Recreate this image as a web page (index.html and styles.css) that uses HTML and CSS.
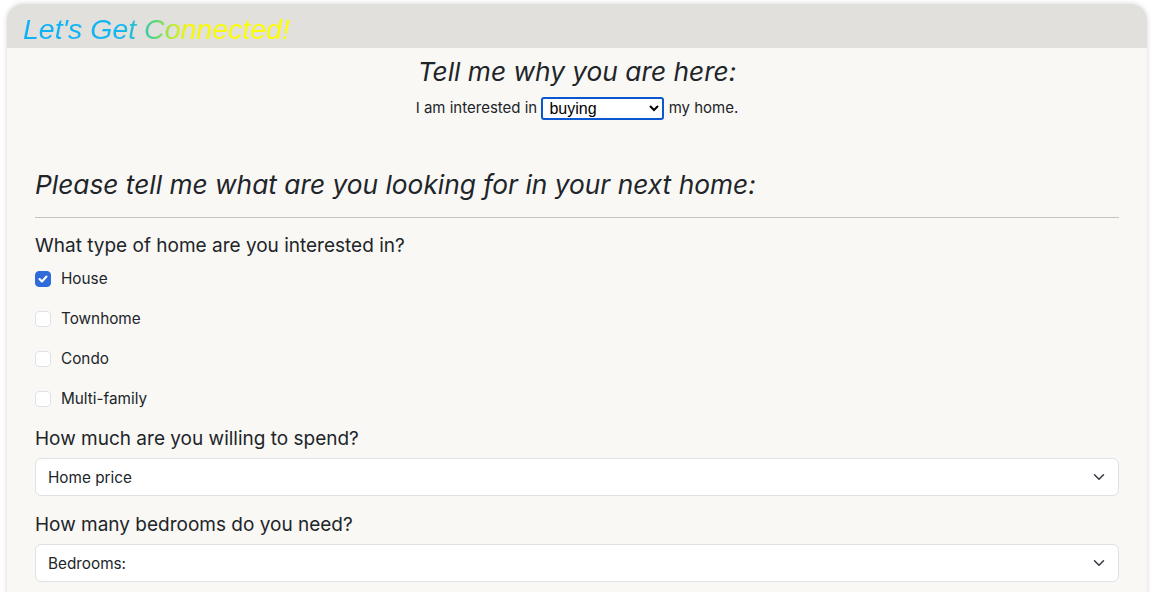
FILE: index.html
```html
<!DOCTYPE html>
<html>
<head>
<meta charset="utf-8">
<link rel="stylesheet" href="styles.css">
</head>
<body>
<div class="card">
  <div class="card-header">
    <h1 class="brand">Let's Get Connected!</h1>
  </div>
  <div class="card-body">
    <div class="intro">
      <h2 class="intro-title">Tell me why you are here:</h2>
      <p class="intro-line">I am interested in
        <select class="mini-select">
          <option>buying</option>
          <option>selling</option>
        </select>
        my home.</p>
    </div>
    <h2 class="section-title">Please tell me what are you looking for in your next home:</h2>
    <hr class="divider">
    <div class="question">What type of home are you interested in?</div>
    <div class="checks">
      <label class="check"><input type="checkbox" class="check-input" checked><span>House</span></label>
      <label class="check"><input type="checkbox" class="check-input"><span>Townhome</span></label>
      <label class="check"><input type="checkbox" class="check-input"><span>Condo</span></label>
      <label class="check"><input type="checkbox" class="check-input"><span>Multi-family</span></label>
    </div>
    <div class="question">How much are you willing to spend?</div>
    <div class="select-wrap">
      <select class="form-select"><option>Home price</option></select>
      <svg class="chev" viewBox="0 0 16 16" width="16" height="16"><path d="M2 5l6 6 6-6" fill="none" stroke="#343a40" stroke-width="2" stroke-linecap="round" stroke-linejoin="round"/></svg>
    </div>
    <div class="question">How many bedrooms do you need?</div>
    <div class="select-wrap">
      <select class="form-select"><option>Bedrooms:</option></select>
      <svg class="chev" viewBox="0 0 16 16" width="16" height="16"><path d="M2 5l6 6 6-6" fill="none" stroke="#343a40" stroke-width="2" stroke-linecap="round" stroke-linejoin="round"/></svg>
    </div>
  </div>
</div>
</body>
</html>
```

FILE: styles.css
```css
html, body {
  margin: 0;
  padding: 0;
  background: #ffffff;
}
body {
  font-family: Inter, "Noto Sans", sans-serif;
  color: #212529;
  padding: 4px 7px 0;
  height: 592px;
  box-sizing: border-box;
  overflow: hidden;
}
.card {
  background: #f9f8f5;
  border-radius: 16px 16px 0 0;
  box-shadow: 0 0 5px rgba(0, 0, 0, 0.18);
  min-height: 700px;
  overflow: hidden;
}
.card-header {
  height: 44px;
  background: #e1e0dc;
  padding-left: 16px;
  display: flex;
  align-items: flex-end;
}
.brand {
  margin: 0 0 2px;
  font-family: "Liberation Sans", Arial, sans-serif;
  font-style: italic;
  font-weight: 400;
  font-size: 28.5px;
  line-height: 34px;
  background: linear-gradient(90deg, #0cb2f7 0%, #12b6f0 36%, #30c4c4 44%, #5cd872 50%, #b8ec2a 56%, #f6f808 62%, #ffff00 100%);
  -webkit-background-clip: text;
  background-clip: text;
  color: transparent;
}
.card-body {
  padding: 0 28px;
}
.intro {
  text-align: center;
  padding-top: 8px;
}
.intro-title {
  margin: 0;
  font-size: 26.3px;
  font-style: italic;
  font-weight: 400;
  line-height: 32px;
}
.intro-line {
  margin: 9px 0 0;
  font-size: 15px;
  line-height: 22px;
}
.mini-select {
  font-family: "Liberation Sans", Arial, sans-serif;
  font-size: 16px;
  width: 123px;
  height: 23px;
  border: 2px solid #0b57d0;
  border-radius: 3px;
  background: #fff;
  color: #000;
  padding: 0 2px;
  vertical-align: middle;
}
.section-title {
  margin: 49px 0 0;
  font-size: 26.3px;
  font-style: italic;
  font-weight: 400;
  line-height: 32px;
}
.divider {
  margin: 16px 0 0;
  border: 0;
  border-top: 1px solid #c5c4c1;
}
.question {
  font-size: 19px;
  line-height: 24px;
  margin-top: 16px;
}
.checks {
  display: flex;
  flex-direction: column;
  gap: 16px;
  margin-top: 9px;
}
.check {
  display: flex;
  align-items: center;
  gap: 10px;
  font-size: 15.3px;
  line-height: 24px;
}
.check-input {
  appearance: none;
  -webkit-appearance: none;
  width: 16px;
  height: 16px;
  margin: 0;
  border: 1px solid #dee2e6;
  border-radius: 4px;
  background: #fff;
}
.check-input:checked {
  background: #2f6bd9 url("data:image/svg+xml,%3csvg xmlns='http://www.w3.org/2000/svg' viewBox='0 0 20 20'%3e%3cpath fill='none' stroke='%23fff' stroke-linecap='round' stroke-linejoin='round' stroke-width='3' d='m5 10 3.5 3.5 6.5-7'/%3e%3c/svg%3e") center/100% no-repeat;
  border-color: #2f6bd9;
}
.checks + .question {
  margin-top: 16px;
}
.select-wrap {
  position: relative;
  margin-top: 7px;
}
.select-wrap + .question {
  margin-top: 17px;
}
.form-select {
  appearance: none;
  -webkit-appearance: none;
  display: block;
  width: 100%;
  height: 38px;
  padding: 0 36px 0 12px;
  font-family: Inter, "Noto Sans", sans-serif;
  font-size: 15.3px;
  color: #212529;
  background: #fff;
  border: 1px solid #dee2e6;
  border-radius: 6px;
}
.chev {
  position: absolute;
  right: 14px;
  top: 13px;
  width: 12px;
  height: 12px;
  pointer-events: none;
}
```
